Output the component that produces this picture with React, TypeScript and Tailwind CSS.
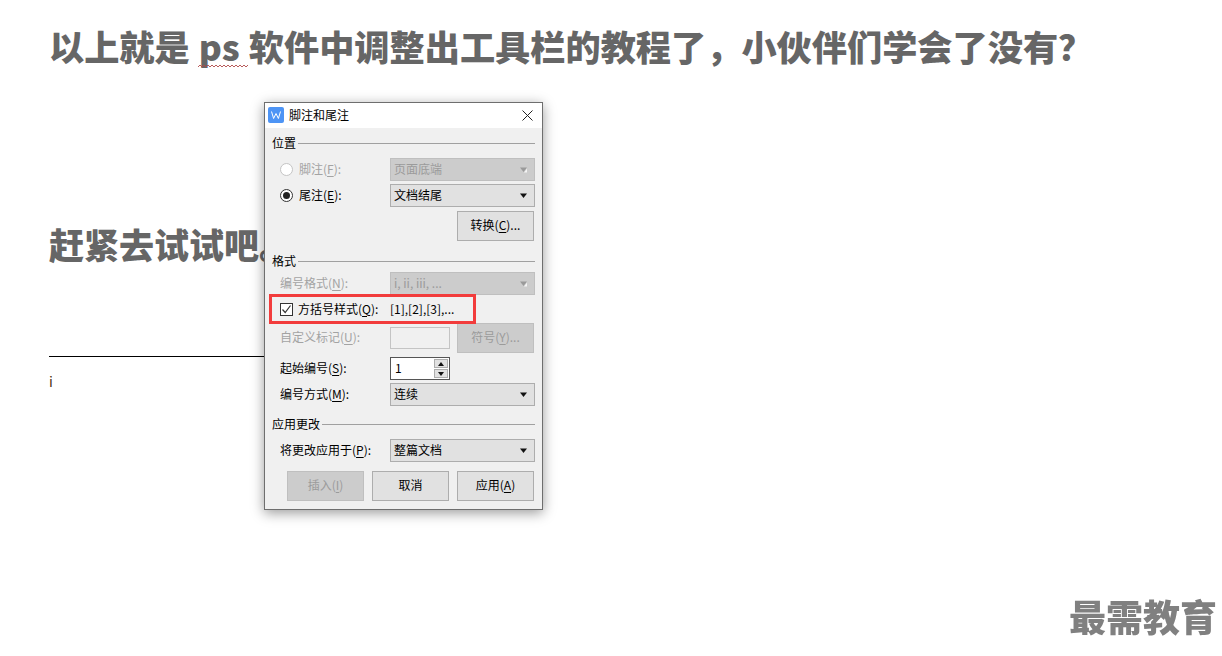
const cjk = "font-['Noto_Sans_CJK_SC','Noto_Sans',sans-serif]";

function Arrow({ disabled }: { disabled?: boolean }) {
  return (
    <svg width="10" height="6" viewBox="0 0 10 6" className="shrink-0">
      <path d="M1 0.5 H8 L4.5 5 Z" fill={disabled ? "#9a9a9a" : "#111"} />
      {disabled && <path d="M8 1.5 L5 5.5 H8 Z" fill="#f4f4f4" />}
    </svg>
  );
}

function Key({ children }: { children: string }) {
  return <span className="underline underline-offset-2">{children}</span>;
}

function Select({ value, disabled }: { value: string; disabled?: boolean }) {
  return (
    <div
      className={`w-[145px] h-[23px] border flex items-center justify-between pl-[3px] pr-[5px] ${
        disabled ? "bg-[#cccccc] border-[#bfbfbf] text-[#9b9b9b]" : "bg-[#e1e1e1] border-[#adadad] text-black"
      }`}
    >
      <span className="pb-[2px]">{value}</span>
      <Arrow disabled={disabled} />
    </div>
  );
}

function Btn({ children, disabled }: { children: React.ReactNode; disabled?: boolean }) {
  return (
    <div
      className={`w-[77px] h-[30px] border flex items-center justify-center pb-[2px] ${
        disabled ? "bg-[#cccccc] border-[#bfbfbf] text-[#9b9b9b]" : "bg-[#e1e1e1] border-[#adadad] text-black"
      }`}
    >
      <span>{children}</span>
    </div>
  );
}

function Section({ title, className }: { title: string; className?: string }) {
  return (
    <div className={`h-4 flex items-center gap-[2px] ${className ?? ""}`}>
      <span className="text-black">{title}</span>
      <div className="flex-1 h-px bg-[#a0a0a0]" />
    </div>
  );
}

function Radio({ checked, disabled }: { checked?: boolean; disabled?: boolean }) {
  return (
    <div
      className={`w-[13px] h-[13px] rounded-full border bg-white flex items-center justify-center mr-[6px] ${
        disabled ? "border-[#c4c4c4]" : "border-[#333]"
      }`}
    >
      {checked && <div className="w-[7px] h-[7px] rounded-full bg-[#222]" />}
    </div>
  );
}

function Row({ children, className }: { children: React.ReactNode; className?: string }) {
  return <div className={`flex items-center pl-2 ${className ?? ""}`}>{children}</div>;
}

function Dialog() {
  return (
    <div className={`absolute left-[264px] top-[102px] w-[279px] h-[408px] border border-[#6e6e6e] bg-[#f0f0f0] shadow-[0_3px_12px_rgba(0,0,0,0.4)] text-[12px] leading-4 ${cjk}`}>
      <div className="h-[25px] bg-white flex items-center pl-[3px] pr-[9px] pb-px">
        <svg width="16" height="16" viewBox="0 0 16 16" className="mr-[5px]">
          <rect width="16" height="16" rx="2" fill="#4d94f5" />
          <path d="M3.5 4.5 L5.6 11.5 L8 6.5 L10.4 11.5 L12.5 4.5" fill="none" stroke="#fff" strokeWidth="1" />
        </svg>
        <span className="text-black pb-px">脚注和尾注</span>
        <svg width="11" height="11" viewBox="0 0 11 11" className="ml-auto">
          <path d="M0.5 0.5 L10.5 10.5 M10.5 0.5 L0.5 10.5" stroke="#222" strokeWidth="1" />
        </svg>
      </div>

      <div className="pt-[7px] pl-[7px] pr-[7px] flex flex-col">
        <Section title="位置" />
        <Row className="mt-[7px] h-[23px]">
          <Radio disabled />
          <span className="w-[91px] pb-[2px] text-[#a3a3a3]">脚注(<Key>F</Key>):</span>
          <Select value="页面底端" disabled />
        </Row>
        <Row className="mt-[3px] h-[23px]">
          <Radio checked />
          <span className="w-[91px] pb-[2px] text-black">尾注(<Key>E</Key>):</span>
          <Select value="文档结尾" />
        </Row>
        <div className="mt-1 flex justify-end pr-px">
          <Btn>转换(<Key>C</Key>)...</Btn>
        </div>

        <Section title="格式" className="mt-3" />
        <Row className="mt-[3px] h-[23px]">
          <span className="w-[110px] pb-[2px] text-[#a3a3a3]">编号格式(<Key>N</Key>):</span>
          <Select value="i, ii, iii, ..." disabled />
        </Row>
        <Row className="mt-[3px] h-[23px]">
          <div className="w-[13px] h-[13px] border border-[#333] bg-white flex items-center justify-center mr-[5px]">
            <svg width="11" height="11" viewBox="0 0 11 11">
              <path d="M1.5 5.5 L4.2 8.5 L9.5 1.5" fill="none" stroke="#333" strokeWidth="1.2" />
            </svg>
          </div>
          <span className="w-[92px] pb-[2px] text-black whitespace-nowrap">方括号样式(<Key>Q</Key>):</span>
          <span className="pb-[2px] text-black">[1],[2],[3],...</span>
        </Row>
        <Row className="mt-[2px] h-[30px]">
          <span className="w-[110px] pb-[2px] text-[#a3a3a3]">自定义标记(<Key>U</Key>):</span>
          <div className="w-[60px] h-[22px] border border-[#c4c4c4] bg-[#f0f0f0] mr-[7px]" />
          <Btn disabled>符号(<Key>Y</Key>)...</Btn>
        </Row>
        <Row className="mt-1 h-[23px]">
          <span className="w-[110px] pb-[2px] text-black">起始编号(<Key>S</Key>):</span>
          <div className="w-[60px] h-[23px] border border-[#555] bg-white flex items-center justify-between pl-[4px] pr-px">
            <span className="pb-[2px] text-black">1</span>
            <div className="flex flex-col gap-px">
              <div className="w-[14px] h-[9px] bg-[#e1e1e1] border border-[#adadad] flex items-center justify-center">
                <svg width="6" height="4" viewBox="0 0 6 4"><path d="M3 0 L6 4 H0 Z" fill="#111" /></svg>
              </div>
              <div className="w-[14px] h-[9px] bg-[#e1e1e1] border border-[#adadad] flex items-center justify-center">
                <svg width="6" height="4" viewBox="0 0 6 4"><path d="M0 0 H6 L3 4 Z" fill="#111" /></svg>
              </div>
            </div>
          </div>
        </Row>
        <Row className="mt-[3px] h-[23px]">
          <span className="w-[110px] pb-[2px] text-black">编号方式(<Key>M</Key>):</span>
          <Select value="连续" />
        </Row>

        <Section title="应用更改" className="mt-[10px]" />
        <Row className="mt-[7px] h-[23px]">
          <span className="w-[110px] pb-[2px] text-black">将更改应用于(<Key>P</Key>):</span>
          <Select value="整篇文档" />
        </Row>
        <div className="mt-[9px] flex justify-end gap-2 pr-px">
          <Btn disabled>插入(<Key>I</Key>)</Btn>
          <Btn>取消</Btn>
          <Btn>应用(<Key>A</Key>)</Btn>
        </div>
      </div>

      {/* red annotation around the bracket option */}
      <div className="absolute left-[4px] top-[191px] w-[207px] h-[30px] border-[3px] border-[#f23c3c]" />
    </div>
  );
}

export default function App() {
  return (
    <div className={`relative w-[1222px] h-[656px] overflow-hidden bg-white ${cjk}`}>
      <div className="pt-[21px] pl-[49px] flex flex-col">
        <h1 className="h-[50px] leading-[50px] text-[35.2px] font-black text-[#666666] whitespace-nowrap">
          以上就是{" "}
          <span className="relative px-[1px]">
            ps
            <svg width="50" height="4" viewBox="0 0 50 4" className="absolute left-0 top-[44px]">
              <path
                d="M0 3 L2 1 L4 3 L6 1 L8 3 L10 1 L12 3 L14 1 L16 3 L18 1 L20 3 L22 1 L24 3 L26 1 L28 3 L30 1 L32 3 L34 1 L36 3 L38 1 L40 3 L42 1 L44 3 L46 1 L48 3 L50 1"
                fill="none"
                stroke="#b04848"
                strokeWidth="0.9"
              />
            </svg>
          </span>{" "}
          软件中调整出工具栏的教程了，小伙伴们学会了没有？
        </h1>
        <p className="mt-[148px] h-[50px] leading-[50px] text-[35px] font-black text-[#666666]">赶紧去试试吧。</p>
        <div className="mt-[87px] w-[230px] h-px bg-black" />
        <p className="mt-[14px] text-[14px] leading-5 text-[#4a3010]">i</p>
      </div>

      <Dialog />

      <div className="absolute right-[5px] top-[593px] text-[37px] leading-[46px] font-black text-[#808080] whitespace-nowrap blur-[0.4px]">
        最需教育
      </div>
    </div>
  );
}
